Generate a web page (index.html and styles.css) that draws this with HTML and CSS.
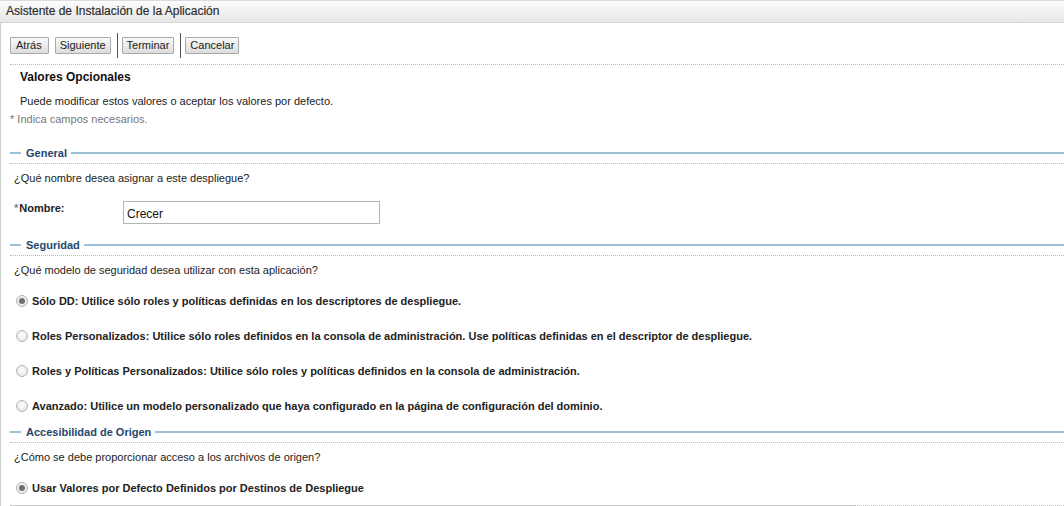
FILE: index.html
```html
<!DOCTYPE html>
<html lang="es">
<head>
<meta charset="utf-8">
<title>Asistente de Instalación de la Aplicación</title>
<link rel="stylesheet" href="styles.css">
</head>
<body>
<div class="header">Asistente de Instalación de la Aplicación</div>
<div class="page">
  <div class="toolbar">
    <button class="btn btn-back">Atrás</button>
    <button class="btn">Siguiente</button>
    <span class="sep"></span>
    <button class="btn">Terminar</button>
    <span class="sep"></span>
    <button class="btn">Cancelar</button>
  </div>
  <div class="dotted"></div>
  <h1 class="title">Valores Opcionales</h1>
  <p class="intro">Puede modificar estos valores o aceptar los valores por defecto.</p>
  <p class="req">* Indica campos necesarios.</p>

  <div class="section"><span class="dash"></span><span class="sec-title">General</span><span class="rule"></span></div>
  <div class="dotted"></div>
  <p class="question">¿Qué nombre desea asignar a este despliegue?</p>
  <div class="field">
    <label class="flabel"><span class="star">*</span>Nombre:</label>
    <input class="input" type="text" value="Crecer">
  </div>

  <div class="section sec2"><span class="dash"></span><span class="sec-title">Seguridad</span><span class="rule"></span></div>
  <div class="dotted"></div>
  <p class="question">¿Qué modelo de seguridad desea utilizar con esta aplicación?</p>
  <div class="radios">
    <label class="opt"><span class="radio on"></span>Sólo DD: Utilice sólo roles y políticas definidas en los descriptores de despliegue.</label>
    <label class="opt"><span class="radio"></span>Roles Personalizados: Utilice sólo roles definidos en la consola de administración. Use políticas definidas en el descriptor de despliegue.</label>
    <label class="opt"><span class="radio"></span>Roles y Políticas Personalizados: Utilice sólo roles y políticas definidos en la consola de administración.</label>
    <label class="opt"><span class="radio"></span>Avanzado: Utilice un modelo personalizado que haya configurado en la página de configuración del dominio.</label>
  </div>

  <div class="section sec3"><span class="dash"></span><span class="sec-title">Accesibilidad de Origen</span><span class="rule"></span></div>
  <div class="dotted"></div>
  <p class="question">¿Cómo se debe proporcionar acceso a los archivos de origen?</p>
  <div class="radios">
    <label class="opt"><span class="radio on"></span>Usar Valores por Defecto Definidos por Destinos de Despliegue</label>
  </div>
  <div class="footer"><span class="solid"></span><span class="dots"></span></div>
</div>
</body>
</html>
```
FILE: styles.css
```css
* { box-sizing: border-box; }
html, body { margin: 0; padding: 0; background: #fff; }
body {
  font-family: "Liberation Sans", Arial, sans-serif;
  font-size: 11px;
  color: #222;
  width: 1064px;
  height: 506px;
  overflow: hidden;
}
.header {
  height: 23px;
  border-top: 1px solid #dcdcdc;
  border-bottom: 1px solid #d3d3d3;
  background: linear-gradient(#fdfdfd, #e6e7e6);
  color: #2e2e2e;
  font-size: 12px;
  padding: 3px 0 0 6px;
  -webkit-text-stroke: 0.2px #2e2e2e;
}
.page {
  border-left: 1px solid #cfcfcf;
  padding-left: 9px;
  height: 483px;
}
.toolbar {
  display: flex;
  align-items: center;
  height: 41px;
  padding-top: 3px;
}
.btn {
  font-family: "Liberation Sans", Arial, sans-serif;
  font-size: 11px;
  color: #222;
  height: 17px;
  padding: 0 4px;
  margin: 0 6px 0 0;
  border: 1px solid #a9a9a9;
  border-radius: 1px;
  background: linear-gradient(#fafafa, #dcdcdc);
  line-height: 15px;
}
.btn-back { padding: 0 6px 0 5px; }
.sep {
  width: 1px;
  height: 25px;
  background: #555;
  margin: 0 4px 0 0;
}
.dotted {
  border-top: 1px dotted #b8b8b8;
  height: 0;
}
.title {
  font-size: 12px;
  font-weight: bold;
  margin: 5px 0 0 10px;
  line-height: 15px;
  color: #111;
}
.intro { margin: 9px 0 0 10px; line-height: 14px; }
.req { margin: 4px 0 0 0; color: #777; line-height: 14px; }
.section {
  display: flex;
  align-items: center;
  margin-top: 20px;
  height: 14px;
}
.sec2 { margin-top: 14px; }
.sec3 { margin-top: 12px; }
.dash { width: 11px; height: 2px; background: #9ebfd8; }
.rule { flex: 1; height: 2px; background: #9ebfd8; }
.sec-title {
  font-weight: bold;
  color: #24476c;
  padding: 0 4px 0 5px;
  line-height: 14px;
}
.section + .dotted { margin-top: 3px; }
.question { margin: 7px 0 0 4px; line-height: 14px; }
.field {
  display: flex;
  align-items: flex-start;
  margin-top: 16px;
  padding-left: 4px;
}
.flabel {
  font-weight: bold;
  width: 109px;
  padding-top: 1px;
}
.star { font-weight: normal; color: #555; margin-right: 1px; }
.input {
  width: 257px;
  height: 23px;
  border: 1px solid #b5b5b5;
  font-family: "Liberation Sans", Arial, sans-serif;
  font-size: 12px;
  padding: 2px 3px 0;
  color: #111;
  margin: 0;
}
.radios { display: flex; flex-direction: column; }
.opt {
  display: flex;
  align-items: center;
  font-weight: bold;
  height: 14px;
  margin-top: 21px;
  padding-left: 6px;
}
.radios .opt:first-child { margin-top: 17px; }
.radio {
  width: 12px;
  height: 12px;
  border-radius: 50%;
  border: 1px solid #b4b4b4;
  background: radial-gradient(circle at 50% 40%, #fefefe, #e2e2e2);
  margin-right: 4px;
  position: relative;
  flex: none;
}
.radio.on::after {
  content: "";
  position: absolute;
  left: 2px; top: 2px;
  width: 6px; height: 6px;
  border-radius: 50%;
  background: #707070;
}
.footer {
  display: flex;
  margin-top: 10px;
}
.solid { width: 845px; border-top: 2px solid #c9c9c9; }
.dots { flex: 1; border-top: 1px dotted #bdbdbd; }
```
